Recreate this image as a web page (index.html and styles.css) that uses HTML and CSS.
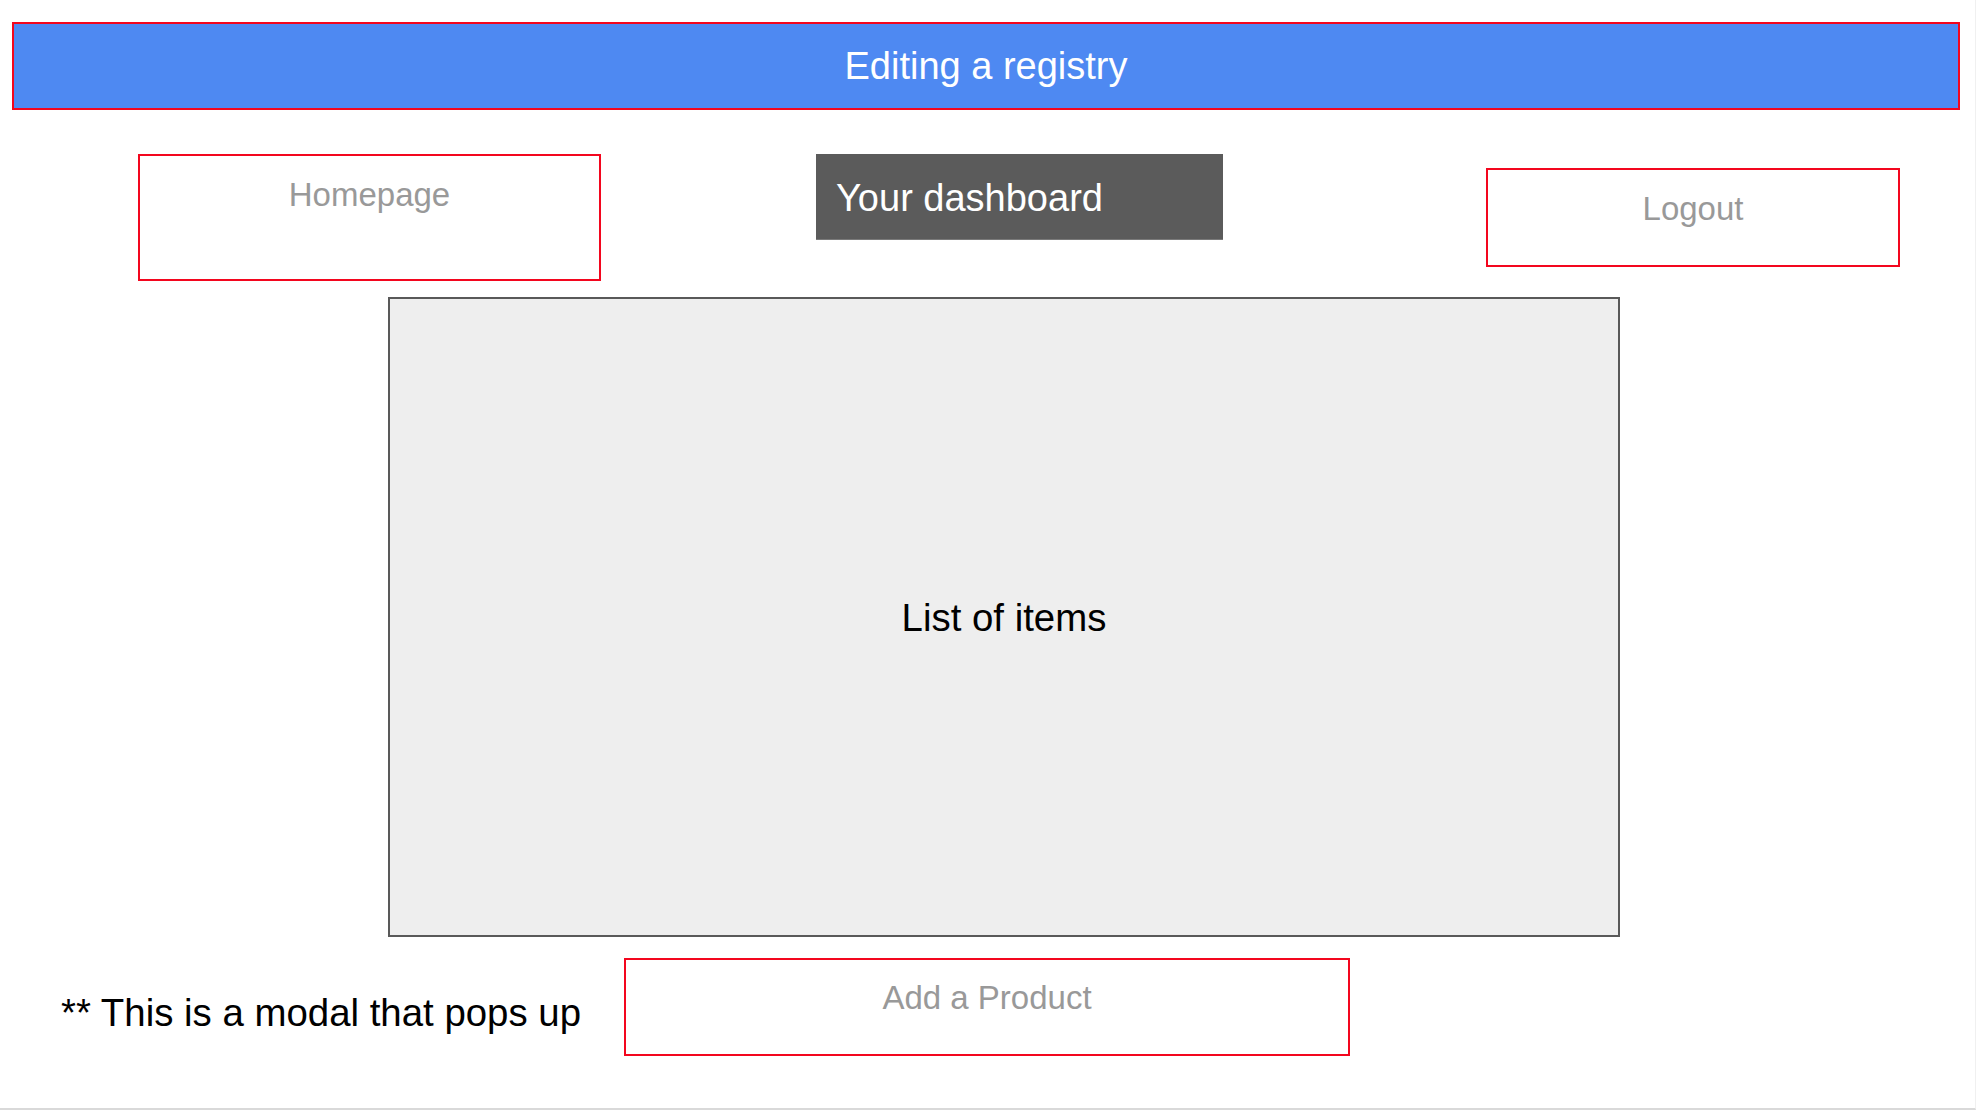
FILE: index.html
```html
<!DOCTYPE html>
<html lang="en">
<head>
<meta charset="utf-8">
<title>Editing a registry</title>
<link rel="stylesheet" href="styles.css">
</head>
<body>
<div class="page">
  <header class="title-bar">Editing a registry</header>
  <nav class="nav-row">
    <a class="btn btn-home">Homepage</a>
    <div class="dashboard">Your dashboard</div>
    <a class="btn btn-logout">Logout</a>
  </nav>
  <section class="list-box">List of items</section>
  <div class="bottom-row">
    <p class="modal-note">** This is a modal that pops up</p>
    <a class="btn btn-add">Add a Product</a>
  </div>
</div>
</body>
</html>
```

FILE: styles.css
```css
* { box-sizing: border-box; }

html, body {
  margin: 0;
  padding: 0;
  background: #ffffff;
}

body {
  font-family: "Liberation Sans", Arial, sans-serif;
}

.page {
  width: 1976px;
  height: 1110px;
  border-bottom: 2px solid #d9d9d9;
  border-right: 1px solid #f0f0f0;
  padding-top: 22px;
  overflow: hidden;
}

.title-bar {
  margin: 0 15px 0 12px;
  height: 88px;
  background: #4e89f2;
  border: 2px solid #f3061e;
  color: #ffffff;
  font-size: 38px;
  line-height: 1.15;
  padding-top: 2px;
  display: flex;
  align-items: center;
  justify-content: center;
}

.nav-row {
  display: flex;
  align-items: flex-start;
  margin-top: 44px;
  padding-left: 138px;
}

.btn {
  display: block;
  border: 2px solid #f3061e;
  background: #ffffff;
  color: #999999;
  font-size: 33px;
  line-height: 1.15;
  text-align: center;
  padding-top: 20px;
  text-decoration: none;
}

.btn-home {
  width: 463px;
  height: 127px;
}

.dashboard {
  width: 407px;
  height: 86px;
  margin-left: 215px;
  background: #5b5b5b;
  color: #ffffff;
  font-size: 38px;
  line-height: 1.15;
  padding: 23px 0 0 20px;
  border-bottom: 1px solid #7a7a7a;
}

.btn-logout {
  width: 414px;
  height: 99px;
  margin-left: 263px;
  margin-top: 14px;
}

.list-box {
  margin: 16px 0 0 388px;
  width: 1232px;
  height: 640px;
  background: #eeeeee;
  border: 2px solid #595959;
  color: #000000;
  font-size: 38.4px;
  line-height: 1.15;
  padding-top: 2px;
  display: flex;
  align-items: center;
  justify-content: center;
}

.bottom-row {
  display: flex;
  align-items: flex-start;
  margin-top: 21px;
  padding-left: 61px;
}

.modal-note {
  margin: 33px 0 0 0;
  width: 563px;
  white-space: nowrap;
  color: #000000;
  font-size: 38.4px;
  line-height: 1.15;
}

.btn-add {
  width: 726px;
  height: 98px;
  padding-top: 19px;
}
```
